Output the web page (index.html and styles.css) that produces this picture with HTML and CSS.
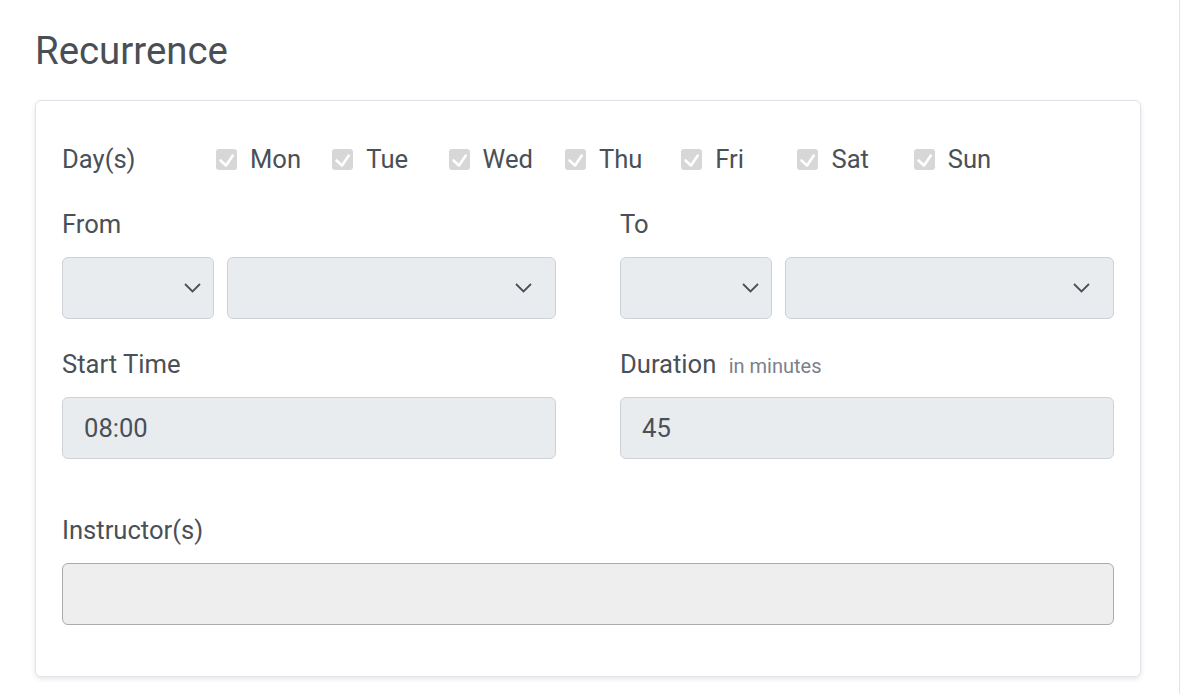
FILE: index.html
```html
<!DOCTYPE html>
<html>
<head>
<meta charset="utf-8">
<link rel="stylesheet" href="styles.css">
</head>
<body>
<div class="page">
  <h1 class="title">Recurrence</h1>
  <div class="card">
    <div class="days">
      <div class="label days-label">Day(s)</div>
      <div class="day"><span class="cb"><svg viewBox="0 0 21 21" width="21" height="21"><path d="M4.5 11.5l5.5 5 6.8-10" fill="none" stroke="#fff" stroke-width="2.6" stroke-linecap="round" stroke-linejoin="round"/></svg></span><span class="label">Mon</span></div>
      <div class="day"><span class="cb"><svg viewBox="0 0 21 21" width="21" height="21"><path d="M4.5 11.5l5.5 5 6.8-10" fill="none" stroke="#fff" stroke-width="2.6" stroke-linecap="round" stroke-linejoin="round"/></svg></span><span class="label">Tue</span></div>
      <div class="day"><span class="cb"><svg viewBox="0 0 21 21" width="21" height="21"><path d="M4.5 11.5l5.5 5 6.8-10" fill="none" stroke="#fff" stroke-width="2.6" stroke-linecap="round" stroke-linejoin="round"/></svg></span><span class="label">Wed</span></div>
      <div class="day"><span class="cb"><svg viewBox="0 0 21 21" width="21" height="21"><path d="M4.5 11.5l5.5 5 6.8-10" fill="none" stroke="#fff" stroke-width="2.6" stroke-linecap="round" stroke-linejoin="round"/></svg></span><span class="label">Thu</span></div>
      <div class="day"><span class="cb"><svg viewBox="0 0 21 21" width="21" height="21"><path d="M4.5 11.5l5.5 5 6.8-10" fill="none" stroke="#fff" stroke-width="2.6" stroke-linecap="round" stroke-linejoin="round"/></svg></span><span class="label">Fri</span></div>
      <div class="day"><span class="cb"><svg viewBox="0 0 21 21" width="21" height="21"><path d="M4.5 11.5l5.5 5 6.8-10" fill="none" stroke="#fff" stroke-width="2.6" stroke-linecap="round" stroke-linejoin="round"/></svg></span><span class="label">Sat</span></div>
      <div class="day"><span class="cb"><svg viewBox="0 0 21 21" width="21" height="21"><path d="M4.5 11.5l5.5 5 6.8-10" fill="none" stroke="#fff" stroke-width="2.6" stroke-linecap="round" stroke-linejoin="round"/></svg></span><span class="label">Sun</span></div>
    </div>

    <div class="grid row-range">
      <div class="field">
        <div class="label">From</div>
        <div class="pair">
          <div class="select sel-small"><svg class="chev" viewBox="0 0 17 10" width="17" height="10"><path d="M1 1l7.5 7.5L16 1" fill="none" stroke="#4a5056" stroke-width="1.8"/></svg></div>
          <div class="select sel-big"><svg class="chev" viewBox="0 0 17 10" width="17" height="10"><path d="M1 1l7.5 7.5L16 1" fill="none" stroke="#4a5056" stroke-width="1.8"/></svg></div>
        </div>
      </div>
      <div class="field">
        <div class="label">To</div>
        <div class="pair">
          <div class="select sel-small"><svg class="chev" viewBox="0 0 17 10" width="17" height="10"><path d="M1 1l7.5 7.5L16 1" fill="none" stroke="#4a5056" stroke-width="1.8"/></svg></div>
          <div class="select sel-big"><svg class="chev" viewBox="0 0 17 10" width="17" height="10"><path d="M1 1l7.5 7.5L16 1" fill="none" stroke="#4a5056" stroke-width="1.8"/></svg></div>
        </div>
      </div>
    </div>

    <div class="grid row-time">
      <div class="field">
        <div class="label">Start Time</div>
        <div class="input">08:00</div>
      </div>
      <div class="field">
        <div class="label">Duration <span class="hint">in minutes</span></div>
        <div class="input">45</div>
      </div>
    </div>

    <div class="field row-instr">
      <div class="label">Instructor(s)</div>
      <div class="input input-plain"></div>
    </div>
  </div>
</div>
</body>
</html>
```

FILE: styles.css
```css
html, body {
  margin: 0;
  padding: 0;
  background: #fff;
}
body {
  font-family: Roboto, "Liberation Sans", Arial, sans-serif;
  color: #495057;
}
.page {
  box-sizing: border-box;
  width: 1180px;
  height: 694px;
  border-right: 1px solid #e3e3e3;
  padding: 28px 0 0 35px;
}
.title {
  margin: 0 0 26px 0;
  font-size: 38.4px;
  line-height: 46px;
  font-weight: 400;
  color: #4a4f55;
}
.card {
  box-sizing: border-box;
  width: 1106px;
  border: 1px solid #dfe4ea;
  border-radius: 6px;
  box-shadow: 0 2px 5px rgba(0, 0, 0, 0.1);
  padding: 43px 26px 51px 26px;
}
.label {
  font-size: 25.6px;
  line-height: 30px;
  height: 30px;
  color: #495057;
}
.days {
  display: flex;
  align-items: center;
  height: 30px;
}
.days-label {
  width: 154px;
}
.day {
  width: 116.3px;
  display: flex;
  align-items: center;
  gap: 13px;
}
.cb {
  width: 21px;
  height: 21px;
  border-radius: 3px;
  background: #d7d7d7;
  display: flex;
}
.grid {
  display: grid;
  grid-template-columns: 1fr 1fr;
  column-gap: 64px;
}
.row-range {
  margin-top: 35px;
}
.row-time {
  margin-top: 30px;
}
.row-instr {
  margin-top: 56px;
}
.field .label {
  margin-bottom: 18px;
}
.pair {
  display: grid;
  grid-template-columns: 152px 1fr;
  column-gap: 13px;
}
.select {
  box-sizing: border-box;
  height: 62px;
  background: #e9ecef;
  border: 1px solid #ccd2d8;
  border-radius: 6px;
  display: flex;
  align-items: center;
  justify-content: flex-end;
}
.sel-small {
  padding-right: 12px;
}
.sel-big {
  padding-right: 23px;
}
.chev {
  display: block;
}
.input {
  box-sizing: border-box;
  height: 62px;
  background: #e9ecef;
  border: 1px solid #ccd2d8;
  border-radius: 6px;
  padding-left: 21px;
  font-size: 25.6px;
  line-height: 60px;
  color: #495057;
}
.input-plain {
  background: #eeeeee;
  border-color: #ababab;
}
.hint {
  font-size: 20px;
  line-height: 1;
  color: #7a8189;
  margin-left: 6px;
}
```
